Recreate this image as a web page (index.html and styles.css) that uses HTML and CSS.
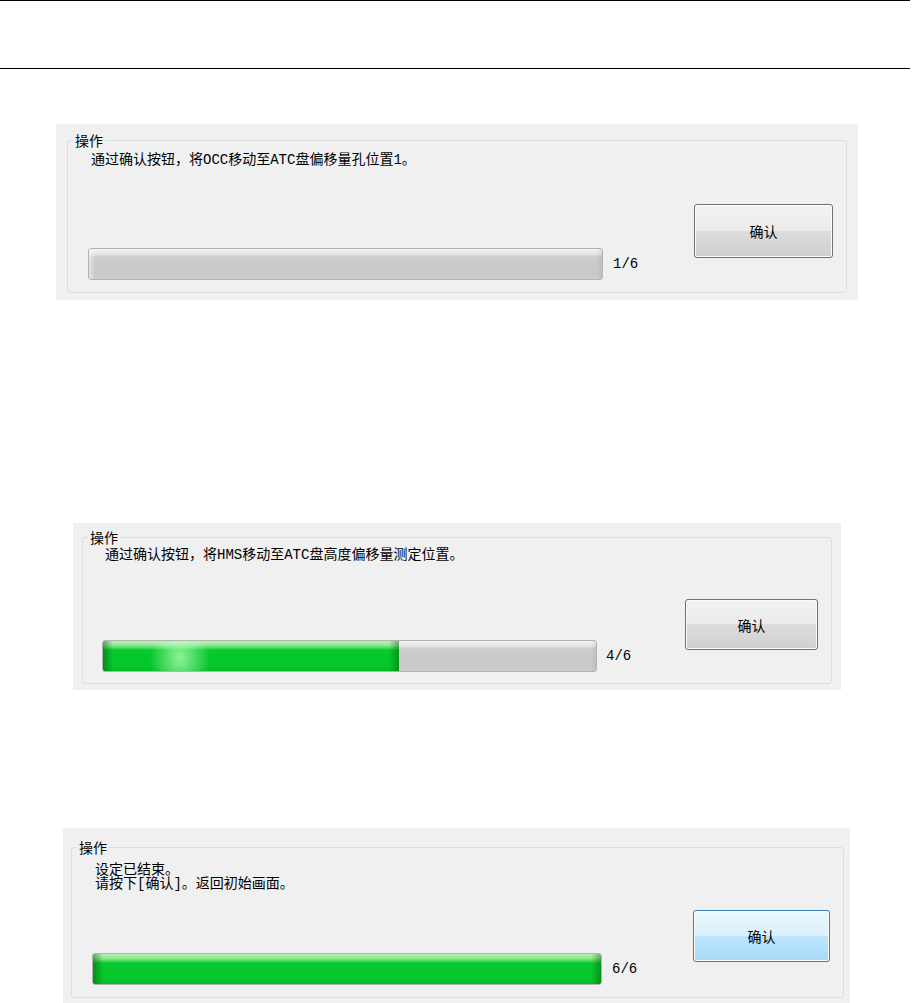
FILE: index.html
```html
<!DOCTYPE html>
<html lang="zh-CN">
<head>
    <meta charset="UTF-8">
    <title>ATC设定</title>
    <link rel="stylesheet" href="styles.css">
</head>
<body>
    <div class="page-rule"></div>

    <section class="panel step-start">
        <fieldset class="group">
            <legend>操作</legend>
            <div class="group-body">
                <p class="message">通过确认按钮，将OCC移动至ATC盘偏移量孔位置1。</p>
                <div class="controls">
                    <div class="meter">
                        <div class="progress"><div class="progress-fill" style="width: 0%;"></div></div>
                        <span class="count">1/6</span>
                    </div>
                    <button class="confirm">确认</button>
                </div>
            </div>
        </fieldset>
    </section>

    <section class="panel step-mid">
        <fieldset class="group">
            <legend>操作</legend>
            <div class="group-body">
                <p class="message">通过确认按钮，将HMS移动至ATC盘高度偏移量测定位置。</p>
                <div class="controls">
                    <div class="meter">
                        <div class="progress"><div class="progress-fill glow" style="width: 60%;"></div></div>
                        <span class="count">4/6</span>
                    </div>
                    <button class="confirm">确认</button>
                </div>
            </div>
        </fieldset>
    </section>

    <section class="panel step-done">
        <fieldset class="group">
            <legend>操作</legend>
            <div class="group-body">
                <p class="message">设定已结束。<br>请按下[确认]。返回初始画面。</p>
                <div class="controls">
                    <div class="meter">
                        <div class="progress"><div class="progress-fill" style="width: 100%;"></div></div>
                        <span class="count">6/6</span>
                    </div>
                    <button class="confirm active">确认</button>
                </div>
            </div>
        </fieldset>
    </section>
</body>
</html>
```

FILE: styles.css
```css
body {
    margin: 0;
    height: 1003px;
    overflow: hidden;
    background: #fff;
    color: #000;
    font-family: "Liberation Mono", "Noto Sans CJK SC", monospace;
    font-size: 14px;
}
.page-rule {
    width: 910px;
    height: 67px;
    border-top: 1px solid #000;
    border-bottom: 1px solid #000;
}

/* grey window area round each group box */
.panel {
    box-sizing: border-box;
    display: flex;
    flex-direction: column;
    background: #f0f0f0;
}
.step-start {
    margin: 55px 0 0 56px;
    width: 802px;
    height: 176px;
    padding: 9px 11px 7px;
}
.step-mid {
    margin: 223px 0 0 73px;
    width: 768px;
    height: 167px;
    padding: 7px 9px 6px;
}
.step-done {
    margin: 138px 0 0 63px;
    width: 787px;
    height: 175px;
    padding: 12px 6px 5px 8px;
}

.group {
    flex: 1;
    display: flex;
    flex-direction: column;
    margin: 0;
    padding: 0;
    min-width: 0;
    border: 1px solid #d5dfe5;
    border-radius: 3px;
}
.group legend {
    margin-left: 5px;
    padding: 0 2px;
    line-height: 14px;
    font-family: "Noto Sans CJK SC", sans-serif;
}
.group-body {
    flex: 1;
    display: flex;
    flex-direction: column;
    padding: 6px 13px 12px 20px;
}
.step-mid .group-body {
    padding: 4px 13px 11px 19px;
}
.step-done .group-body {
    padding: 9px 13px 12px 20px;
}
.message {
    margin: 0 0 0 3px;
    line-height: 14px;
}

.controls {
    margin-top: auto;
    display: flex;
    align-items: flex-end;
}
.meter {
    display: flex;
    align-items: center;
}
.count {
    margin-left: 10px;
    line-height: 14px;
}
.step-mid .count {
    margin-left: 9px;
}

/* progress bar, windows 7 look */
.progress {
    box-sizing: border-box;
    width: 515px;
    height: 32px;
    border: 1px solid #b2b2b2;
    border-radius: 3px;
    overflow: hidden;
    background:
        linear-gradient(to right, rgba(255, 255, 255, 0.5), rgba(255, 255, 255, 0) 6px, rgba(255, 255, 255, 0) calc(100% - 6px), rgba(0, 0, 0, 0.06)),
        linear-gradient(to bottom, #f2f2f2 0, #e4e4e4 18%, #cdcdcd 26%, #c8c8c8 80%, #cfcfcf 100%);
}
.step-mid .progress {
    width: 495px;
}
.step-done .progress {
    width: 510px;
}
.progress-fill {
    height: 100%;
    background:
        linear-gradient(to right, rgba(0, 70, 0, 0.45), rgba(0, 70, 0, 0) 10px, rgba(0, 70, 0, 0) calc(100% - 10px), rgba(0, 70, 0, 0.4)),
        linear-gradient(to bottom, #b9f4b7 0, #8fe98f 14%, #45d658 24%, #07c92d 30%, #04c72b 85%, #09b82a 100%);
}
.progress-fill.glow {
    background:
        radial-gradient(ellipse 30px 40px at 26% 55%, rgba(190, 255, 190, 0.75), rgba(190, 255, 190, 0)),
        linear-gradient(to right, rgba(0, 70, 0, 0.45), rgba(0, 70, 0, 0) 10px, rgba(0, 70, 0, 0) calc(100% - 10px), rgba(0, 70, 0, 0.4)),
        linear-gradient(to bottom, #b9f4b7 0, #8fe98f 14%, #45d658 24%, #07c92d 30%, #04c72b 85%, #09b82a 100%);
}

/* push button */
.confirm {
    margin-left: auto;
    margin-bottom: 22px;
    width: 139px;
    height: 54px;
    padding: 0;
    border: 1px solid #707070;
    border-radius: 3px;
    box-shadow: inset 0 0 0 1px #fcfcfc;
    background: linear-gradient(to bottom, #f2f2f2 0, #ebebeb 50%, #dddddd 50%, #cfcfcf 100%);
    color: #000;
    font-family: "Noto Sans CJK SC", sans-serif;
    font-size: 14px;
}
.step-mid .confirm {
    width: 133px;
    height: 51px;
}
.step-done .confirm {
    width: 137px;
    height: 52px;
    margin-bottom: 23px;
}
.confirm.active {
    border-color: #3c7fb1;
    background: linear-gradient(to bottom, #eaf6fd 0, #d9f0fc 50%, #bee6fd 50%, #a7d9f5 100%);
}
```
